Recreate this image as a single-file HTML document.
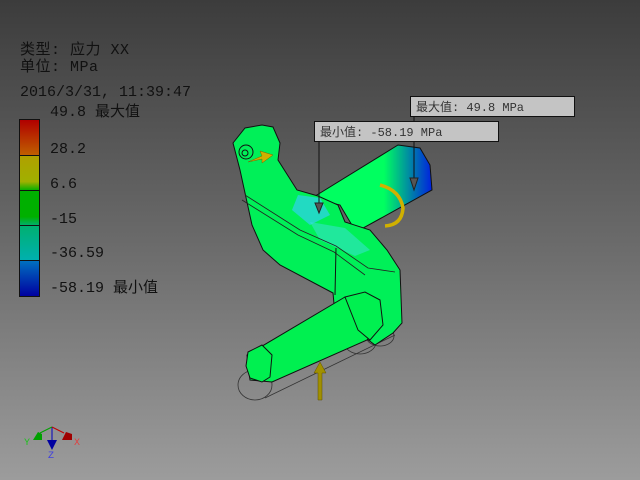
<!DOCTYPE html>
<html><head><meta charset="utf-8"><style>
html,body{margin:0;padding:0}
body{width:640px;height:480px;overflow:hidden;position:relative;background:linear-gradient(#3c3c3c,#6a6a6a 50%,#9c9c9c);font-family:"Liberation Mono","Noto Sans CJK SC",monospace;color:#111}
.t{position:absolute;font-size:15px;line-height:15px;white-space:pre}
</style></head><body>
<div class="t" style="left:20px;top:43px;letter-spacing:0.5px">类型: 应力 XX</div>
<div class="t" style="left:20px;top:60px;letter-spacing:0.5px">单位: MPa</div>
<div class="t" style="left:20px;top:85px">2016/3/31, 11:39:47</div>
<div class="t" style="left:50px;top:105px">49.8 最大值</div>
<div class="t" style="left:50px;top:142px">28.2</div>
<div class="t" style="left:50px;top:177px">6.6</div>
<div class="t" style="left:50px;top:212px">-15</div>
<div class="t" style="left:50px;top:246px">-36.59</div>
<div class="t" style="left:50px;top:281px">-58.19 最小值</div>
<div style="position:absolute;left:19px;top:119px;width:19px;height:176px;border:1px solid #111;background:linear-gradient(#b00000,#c06000 20%,#b0a000 20%,#a0b000 35%,#00b000 40%,#00b000 55%,#00b070 60%,#00b0b0 80%,#0070c0 80%,#0000a0)"></div>
<div style="position:absolute;left:19px;top:155px;width:21px;height:1px;background:#111"></div>
<div style="position:absolute;left:19px;top:190px;width:21px;height:1px;background:#111"></div>
<div style="position:absolute;left:19px;top:225px;width:21px;height:1px;background:#111"></div>
<div style="position:absolute;left:19px;top:260px;width:21px;height:1px;background:#111"></div>
<svg width="640" height="480" style="position:absolute;left:0;top:0">
<defs><linearGradient id="bl" x1="0" y1="0" x2="1" y2="0"><stop offset="0.6" stop-color="#00ff60"/><stop offset="1" stop-color="#0020e0"/></linearGradient></defs>
<g fill="none" stroke="#333" stroke-width="0.8">
<ellipse cx="255" cy="385" rx="17" ry="15"/>
<line x1="255" y1="370" x2="370" y2="330"/><line x1="265" y1="398" x2="395" y2="335"/>
<ellipse cx="360" cy="342" rx="16" ry="12"/><ellipse cx="380" cy="336" rx="14" ry="10"/>
</g>
<polygon points="312,198 398,145 420,148 430,165 432,190 356,232 340,205" fill="url(#bl)" stroke="#111"/>
<polygon points="233,143 245,128 262,125 273,127 280,143 278,160 297,190 318,196 338,205 345,222 370,230 387,250 400,270 402,323 393,333 375,345 335,315 333,293 280,265 263,250 252,225 245,193 240,170" fill="#00f058" stroke="#111"/>
<polygon points="298,195 320,198 330,215 310,225 292,210" fill="#30d0f0" opacity="0.7"/>
<polygon points="310,222 345,228 370,250 355,256 320,240" fill="#40e0e0" opacity="0.5"/>
<polyline points="245,195 300,230 336,246 368,268 395,272" fill="none" stroke="#222" stroke-width="0.8"/>
<polyline points="242,200 298,235 334,252 365,275" fill="none" stroke="#222" stroke-width="0.8"/>
<line x1="336" y1="248" x2="335" y2="295" stroke="#111"/>
<polygon points="247,355 345,297 370,302 375,330 367,340 272,382 250,380" fill="#00f050" stroke="#111"/>
<polygon points="248,352 262,345 272,355 270,377 262,382 250,378 246,366" fill="#00f050" stroke="#111"/>
<polygon points="345,297 365,292 380,300 383,325 370,340 358,330" fill="#00f050" stroke="#111"/>
<circle cx="246" cy="152" r="7" fill="none" stroke="#111"/><circle cx="245" cy="153" r="3" fill="none" stroke="#111"/>
<path d="M248,162 L262,156 L260,151 L273,155 L262,163 L262,159 Z" fill="#d0b000" stroke="#806000" stroke-width="0.5"/>
<path d="M318,400 L318,373 L314,373 L320,362 L326,373 L322,373 L322,400 Z" fill="#a09000" stroke="#605000" stroke-width="0.5"/>
<path d="M380,185 Q400,190 403,208 Q402,225 385,226" fill="none" stroke="#d0b000" stroke-width="3.5"/>
<line x1="414" y1="116" x2="414" y2="180" stroke="#111"/><path d="M410,178 L418,178 L414,190Z" fill="#555" stroke="#222"/>
<line x1="319" y1="141" x2="319" y2="205" stroke="#111"/><path d="M315,203 L323,203 L319,213Z" fill="#555" stroke="#222"/>
<rect x="410.5" y="96.5" width="164" height="20" fill="#c4c4c4" stroke="#111"/>
<rect x="314.5" y="121.5" width="184" height="20" fill="#c4c4c4" stroke="#111"/>
<text x="416" y="111" font-size="12" font-family="Liberation Mono,Noto Sans CJK SC,monospace" fill="#333">最大值: 49.8 MPa</text>
<text x="320" y="136" font-size="12" font-family="Liberation Mono,Noto Sans CJK SC,monospace" fill="#333">最小值: -58.19 MPa</text>
<line x1="52" y1="427" x2="52" y2="442" stroke="#0000c0"/>
<line x1="52" y1="427" x2="40" y2="433" stroke="#00a000"/><line x1="52" y1="427" x2="64" y2="433" stroke="#c00000"/>
<path d="M33,440 L38,432 L42,434 L42,440Z" fill="#00a000"/>
<path d="M62,440 L66,432 L72,434 L72,440Z" fill="#a00000"/>
<path d="M47,440 L57,440 L52,450Z" fill="#0000a0"/>
<text x="24" y="445" font-size="10" fill="#20c020">Y</text>
<text x="74" y="445" font-size="10" fill="#e04040">X</text>
<text x="48" y="458" font-size="10" fill="#4040e0">Z</text>
</svg>
</body></html>
